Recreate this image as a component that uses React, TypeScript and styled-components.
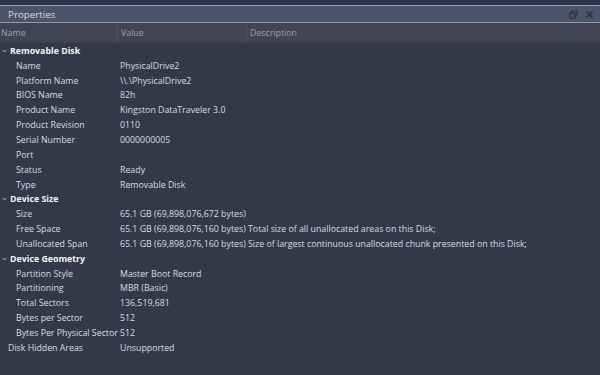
import React from "react";
import styled, { createGlobalStyle } from "styled-components";

const Global = createGlobalStyle`
  html, body { margin: 0; padding: 0; background: #343848; }
  body { font-family: "Open Sans", "Noto Sans", sans-serif; }
`;

const Panel = styled.div`
  width: 600px;
  height: 375px;
  display: flex;
  flex-direction: column;
  background: #343848;
  overflow: hidden;
`;

const TopStrip = styled.div`
  height: 5px;
  background: #2f3343;
`;

const TitleBar = styled.div`
  height: 16px;
  border-top: 1px solid #7f9ec4;
  border-bottom: 1px solid #7f9ec4;
  background: #4b5569;
  display: flex;
  align-items: center;
  padding: 0 6px 0 8px;
  color: #d6dae2;
  font-size: 9.8px;
`;

const Title = styled.div`
  flex: 1;
`;

const IconBtn = styled.svg`
  width: 9px;
  height: 9px;
  margin-left: 7px;
`;

const Header = styled.div`
  height: 19px;
  background: #404555;
  display: grid;
  grid-template-columns: 117px 129px 1fr;
  border-bottom: 1px solid #3a3e4d;
`;

const HeaderCell = styled.div<{ $first?: boolean }>`
  display: flex;
  align-items: center;
  padding-left: ${(p) => (p.$first ? 1 : 3)}px;
  border-left: ${(p) => (p.$first ? "none" : "1px solid #4c5262")};
  color: #98a1b3;
  font-size: 8.8px;
`;

const Body = styled.div`
  padding-top: 0.5px;
  display: flex;
  flex-direction: column;
`;

const Row = styled.div`
  height: 14.85px;
  display: grid;
  grid-template-columns: 120px 128px 1fr;
  align-items: center;
  font-size: 8.8px;
  color: #d8dce4;
  white-space: nowrap;
`;

const Label = styled.div<{ $indent: number }>`
  padding-left: ${(p) => p.$indent}px;
`;

const GroupRow = styled.div`
  height: 14.85px;
  display: flex;
  align-items: center;
  font-size: 8.8px;
  font-weight: 700;
  color: #f2f4f8;
`;

const Chevron = styled.svg`
  width: 5px;
  height: 4px;
  margin: 0 3px 0 2px;
`;

type Prop = { name: string; value?: string; desc?: string };
type Group = { title: string; items: Prop[] };

const groups: Group[] = [
  {
    title: "Removable Disk",
    items: [
      { name: "Name", value: "PhysicalDrive2" },
      { name: "Platform Name", value: "\\\\.\\PhysicalDrive2" },
      { name: "BIOS Name", value: "82h" },
      { name: "Product Name", value: "Kingston DataTraveler 3.0" },
      { name: "Product Revision", value: "0110" },
      { name: "Serial Number", value: "0000000005" },
      { name: "Port", value: "" },
      { name: "Status", value: "Ready" },
      { name: "Type", value: "Removable Disk" },
    ],
  },
  {
    title: "Device Size",
    items: [
      { name: "Size", value: "65.1 GB (69,898,076,672 bytes)" },
      {
        name: "Free Space",
        value: "65.1 GB (69,898,076,160 bytes)",
        desc: "Total size of all unallocated areas on this Disk;",
      },
      {
        name: "Unallocated Span",
        value: "65.1 GB (69,898,076,160 bytes)",
        desc: "Size of largest continuous unallocated chunk presented on this Disk;",
      },
    ],
  },
  {
    title: "Device Geometry",
    items: [
      { name: "Partition Style", value: "Master Boot Record" },
      { name: "Partitioning", value: "MBR (Basic)" },
      { name: "Total Sectors", value: "136,519,681" },
      { name: "Bytes per Sector", value: "512" },
      { name: "Bytes Per Physical Sector", value: "512" },
    ],
  },
];

export default function App() {
  return (
    <>
      <Global />
      <Panel>
        <TopStrip />
        <TitleBar>
          <Title>Properties</Title>
          <IconBtn viewBox="0 0 9 9">
            <rect x="1" y="3" width="5" height="5" fill="none" stroke="#2a2f3b" strokeWidth="1.2" />
            <path d="M3 3V1h5v5H6" fill="none" stroke="#2a2f3b" strokeWidth="1.2" />
          </IconBtn>
          <IconBtn viewBox="0 0 9 9">
            <path d="M1.5 1.5l6 6M7.5 1.5l-6 6" stroke="#2a2f3b" strokeWidth="1.6" />
          </IconBtn>
        </TitleBar>
        <Header>
          <HeaderCell $first>Name</HeaderCell>
          <HeaderCell>Value</HeaderCell>
          <HeaderCell>Description</HeaderCell>
        </Header>
        <Body>
          {groups.map((g) => (
            <React.Fragment key={g.title}>
              <GroupRow>
                <Chevron viewBox="0 0 5 4">
                  <path d="M0.5 0.8L2.5 3L4.5 0.8" fill="none" stroke="#aab2c2" strokeWidth="1" />
                </Chevron>
                {g.title}
              </GroupRow>
              {g.items.map((it) => (
                <Row key={it.name}>
                  <Label $indent={16}>{it.name}</Label>
                  <div>{it.value}</div>
                  <div>{it.desc}</div>
                </Row>
              ))}
            </React.Fragment>
          ))}
          <Row>
            <Label $indent={8}>Disk Hidden Areas</Label>
            <div>Unsupported</div>
            <div />
          </Row>
        </Body>
      </Panel>
    </>
  );
}
